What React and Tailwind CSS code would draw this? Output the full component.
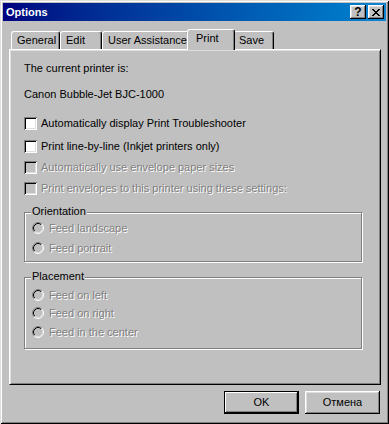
import React from 'react';

// Win98 raised/sunken edges
const RAISED = 'shadow-[inset_-1px_-1px_#000,inset_1px_1px_#fff,inset_-2px_-2px_#808080,inset_2px_2px_#dfdfdf]';
const SUNKEN = 'shadow-[inset_1px_1px_#808080,inset_-1px_-1px_#fff,inset_2px_2px_#000,inset_-2px_-2px_#dfdfdf]';
const DISABLED_TEXT = 'text-[#808080] [text-shadow:1px_1px_0_#fff]';

const TABS = [
  { label: 'General', width: 'w-[49px]' },
  { label: 'Edit', width: 'w-[42px]' },
  { label: 'User Assistance', width: 'w-[87px]' },
  { label: 'Print', width: 'w-[48px]', active: true },
  { label: 'Save', width: 'w-[41px]' },
];

// pixel pattern of the close glyph
const CLOSE_PIXELS = ['11000011', '01100110', '00111100', '00011000', '00111100', '01100110', '11000011'];

const CloseGlyph = () => (
  <svg width="8" height="7" viewBox="0 0 8 7" shapeRendering="crispEdges">
    {CLOSE_PIXELS.map((row, y) =>
      row.split('').map((c, x) => (c === '1' ? <rect key={`${x}-${y}`} x={x} y={y} width="1" height="1" fill="#000" /> : null))
    )}
  </svg>
);

const TitleButton = ({ children }) => (
  <div className={`w-[16px] h-[14px] bg-[#c0c0c0] ${RAISED} flex items-center justify-center`}>{children}</div>
);

const CheckBox = ({ disabled }) => (
  <span className={`block shrink-0 w-[13px] h-[13px] ${disabled ? 'bg-[#c0c0c0]' : 'bg-white'} ${SUNKEN}`} />
);

const Radio = () => (
  <svg width="12" height="12" viewBox="0 0 12 12" className="shrink-0">
    <circle cx="6" cy="6" r="5" fill="#c0c0c0" />
    <path d="M2.11 9.89 A5.5 5.5 0 0 1 9.89 2.11" fill="none" stroke="#808080" strokeWidth="1" />
    <path d="M9.89 2.11 A5.5 5.5 0 0 1 2.11 9.89" fill="none" stroke="#fff" strokeWidth="1" />
    <path d="M2.82 9.18 A4.5 4.5 0 0 1 9.18 2.82" fill="none" stroke="#000" strokeWidth="1" />
    <path d="M9.18 2.82 A4.5 4.5 0 0 1 2.82 9.18" fill="none" stroke="#dfdfdf" strokeWidth="1" />
  </svg>
);

const CheckRow = ({ label, disabled, className }) => (
  <div className={`flex items-center gap-[4px] h-[13px] ${className}`}>
    <CheckBox disabled={disabled} />
    <span className={`leading-[13px] whitespace-nowrap ${disabled ? DISABLED_TEXT : ''}`}>{label}</span>
  </div>
);

const RadioRow = ({ label, className }) => (
  <div className={`flex items-center gap-[5px] h-[12px] ${className}`}>
    <Radio />
    <span className={`leading-[13px] whitespace-nowrap ${DISABLED_TEXT}`}>{label}</span>
  </div>
);

const GroupBox = ({ title, className, children }) => (
  <div
    className={`relative w-[338px] border border-[#808080] shadow-[inset_1px_1px_#fff,1px_1px_#fff] pl-[7px] ${className}`}
  >
    <span className="absolute -top-[8px] left-[6px] px-[1px] bg-[#c0c0c0] leading-[13px]">{title}</span>
    {children}
  </div>
);

const Tab = ({ label, width, active }) =>
  active ? (
    <div
      className={`relative z-10 ${width} h-[21px] -mx-[2px] -mb-[1px] bg-[#c0c0c0] border-t border-l border-white border-r border-r-black rounded-t-[3px] shadow-[inset_-1px_0_#808080] pl-[8px] leading-[17px]`}
    >
      {label}
    </div>
  ) : (
    <div
      className={`${width} h-[18px] bg-[#c0c0c0] border-t border-l border-white border-r border-r-black rounded-t-[3px] shadow-[inset_-1px_0_#808080] pl-[5px] leading-[17px] whitespace-nowrap`}
    >
      {label}
    </div>
  );

const DialogButton = ({ label, isDefault }) => (
  <div
    className={`w-[75px] h-[23px] flex items-center justify-center bg-[#c0c0c0] ${
      isDefault
        ? 'border border-black shadow-[inset_-1px_-1px_#000,inset_1px_1px_#fff,inset_-2px_-2px_#808080]'
        : RAISED
    }`}
  >
    {label}
  </div>
);

export default function App() {
  return (
    <div
      className={`w-[389px] h-[424px] bg-[#c0c0c0] p-[3px] text-[11px] text-black font-['Liberation_Sans',Arial,sans-serif] shadow-[inset_1px_1px_#dfdfdf,inset_-1px_-1px_#000,inset_2px_2px_#fff,inset_-2px_-2px_#808080]`}
    >
      {/* Title bar */}
      <div className="h-[18px] flex items-center bg-linear-to-r from-[#000080] to-[#1084d0] pl-[3px] pr-[2px]">
        <span className="text-white font-bold leading-[18px]">Options</span>
        <div className="ml-auto flex gap-[2px]">
          <TitleButton>
            <span className="font-bold text-[12px] leading-[12px] -mt-[1px]">?</span>
          </TitleButton>
          <TitleButton>
            <CloseGlyph />
          </TitleButton>
        </div>
      </div>

      <div className="pl-[6px] pt-[8px]">
        {/* Tabs */}
        <div className="flex items-end h-[20px] pl-[2px]">
          {TABS.map((t) => (
            <Tab key={t.label} {...t} />
          ))}
        </div>

        {/* Print page */}
        <div className="w-[372px] h-[336px] border-t border-l border-white border-r border-b border-r-black border-b-black shadow-[inset_1px_1px_#dfdfdf,inset_-1px_-1px_#808080] pl-[14px] pt-[12px]">
          <p className="h-[13px] leading-[13px]">The current printer is:</p>
          <p className="mt-[13px] h-[13px] leading-[13px]">Canon Bubble-Jet BJC-1000</p>

          <CheckRow className="mt-[16px]" label="Automatically display Print Troubleshooter" />
          <CheckRow className="mt-[10px]" label="Print line-by-line (Inkjet printers only)" />
          <CheckRow className="mt-[8px]" label="Automatically use envelope paper sizes" disabled />
          <CheckRow className="mt-[8px]" label="Print envelopes to this printer using these settings:" disabled />

          <GroupBox title="Orientation" className="mt-[17px] h-[50px] pt-[9px]">
            <RadioRow label="Feed landscape" />
            <RadioRow className="mt-[8px]" label="Feed portrait" />
          </GroupBox>

          <GroupBox title="Placement" className="mt-[15px] h-[72px] pt-[11px]">
            <RadioRow label="Feed on left" />
            <RadioRow className="mt-[6px]" label="Feed on right" />
            <RadioRow className="mt-[7px]" label="Feed in the center" />
          </GroupBox>
        </div>

        {/* Dialog buttons */}
        <div className="w-[372px] flex justify-end gap-[6px] mt-[6px] pr-[1px]">
          <DialogButton label="OK" isDefault />
          <DialogButton label="Отмена" />
        </div>
      </div>
    </div>
  );
}
